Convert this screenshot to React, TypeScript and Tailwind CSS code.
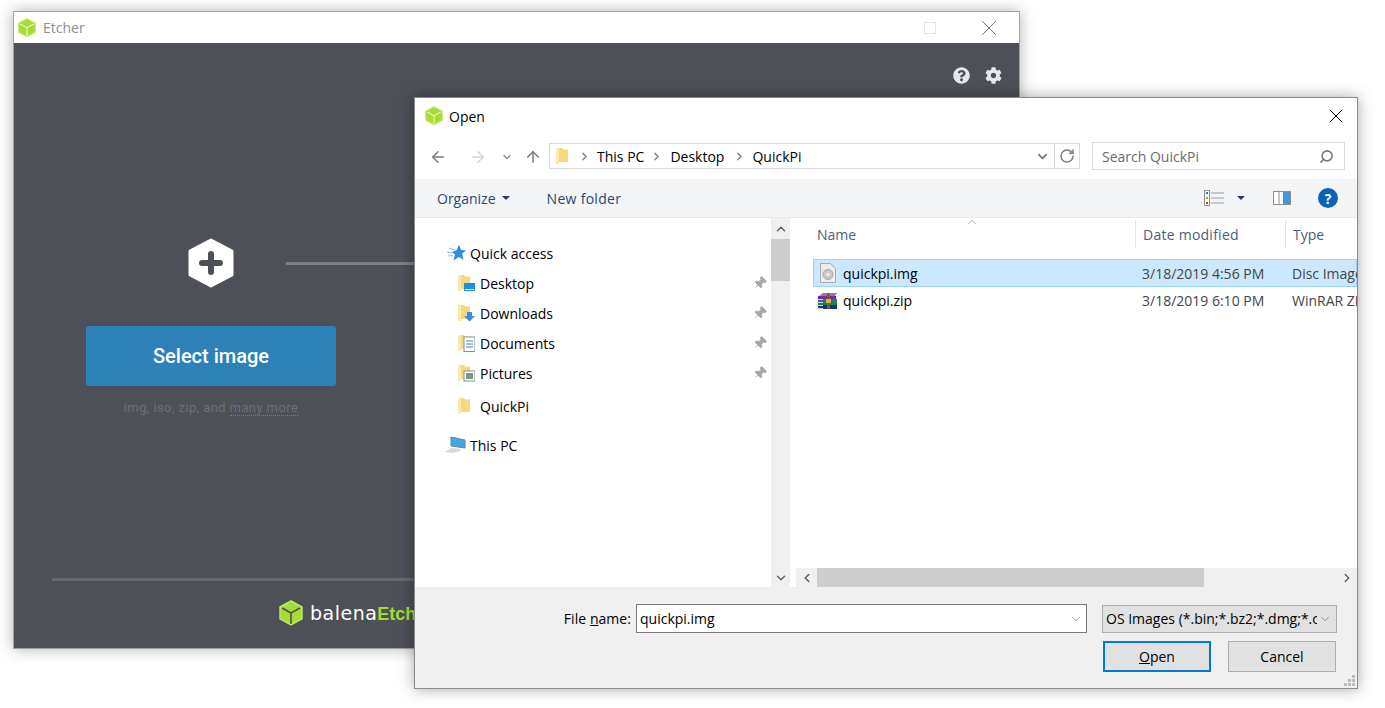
import { ChevronDown, ChevronLeft, ChevronRight, ChevronUp, X, ArrowLeft, ArrowRight, ArrowUp, RotateCw, Search, Pin } from "lucide-react"
import { FaCog, FaQuestionCircle } from "react-icons/fa"

const Cube = ({ size = 20, line = "#e6f7b8" }: { size?: number; line?: string }) => (
  <svg width={size} height={size * 1.08} viewBox="0 0 24 26">
    <path d="M12 1 23 7v12l-11 6-11-6V7z" fill="#a5dd36" stroke="#bfe96b" strokeWidth="1.5" strokeLinejoin="round" />
    <path d="M12 13 3 8M12 13l9-5M12 13v11" stroke={line} strokeWidth="1.6" fill="none" />
  </svg>
)

const Folder = ({ children }: { children?: React.ReactNode }) => (
  <svg width="17" height="18" viewBox="0 0 17 18" className="shrink-0">
    <path d="M0 1h6l1.500 1.500H12V15H2l-2 2z" fill="#f6d97c" />
    <path d="M0 1h3v16H0z" fill="#fbe8ad" />
    {children}
  </svg>
)

const StarIcon = () => (
  <svg width="19" height="18" viewBox="0 0 19 18">
    <path d="M12 .500l2 5.500 5 .3-3.900 3.500 1.400 6.200L12 13l-5.600 3.500 1.600-6L5 8l4.700-2z" fill="#2b8fe6" />
    <path d="M2 4l6 2M0 8l6 1M1 12l5-1" stroke="#86c4f6" strokeWidth="1.200" />
  </svg>
)

const PcIcon = () => (
  <svg width="21" height="18" viewBox="0 0 21 18">
    <path d="M6 1l14 3v8L6 10z" fill="#3fa7ea" stroke="#6d8391" strokeWidth="1" />
    <path d="M0 16l6-4 10 1-1 2-7 2z" fill="#d6d8da" />
  </svg>
)

const DiscFile = () => (
  <svg width="16" height="20" viewBox="0 0 16 20" className="shrink-0">
    <path d="M.5.500h10l5 5v14H.500z" fill="#ececec" stroke="#a9a9a9" />
    <circle cx="8" cy="11.500" r="5" fill="#c9c9c9" stroke="#a5a5a5" />
    <circle cx="8" cy="11.500" r="1.500" fill="#f4f4f4" />
  </svg>
)

const RarIcon = () => (
  <svg width="21" height="16" viewBox="0 0 21 16" className="shrink-0">
    <path d="M2 3l4-3h14l-2 3z" fill="#a56fb0" />
    <path d="M1 3h18v3H1z" fill="#7a2f86" />
    <path d="M1 6h19v3H1z" fill="#1f6fb8" />
    <path d="M1 9h19v3H1z" fill="#16883a" />
    <path d="M1 12h19v4H1z" fill="#1b2f86" />
    <path d="M0 6.500h6M0 9.500h6M0 12.500h6M0 15.500h6" stroke="#d8d8d8" strokeWidth="1" />
    <path d="M10 0h3v16h-3z" fill="#7f5f26" />
    <path d="M9 6h5v4H9z" fill="#d9b24a" />
  </svg>
)

const Caret = ({ color = "#1f3f66" }: { color?: string }) => (
  <svg width="8" height="4" viewBox="0 0 8 4"><path d="M0 0h8L4 4z" fill={color} /></svg>
)

const quickItems = [
  {
    name: "Desktop",
    badge: <><rect x="6" y="9" width="11" height="8" fill="#1e8fe0" /><rect x="7" y="15" width="9" height="1" fill="#fff" /></>,
  },
  {
    name: "Downloads",
    badge: <path d="M9 8h5v4h3l-5.500 5.500L6 12h3z" fill="#3b8ede" />,
  },
  {
    name: "Documents",
    badge: <><rect x="6" y="3" width="11" height="14.500" fill="#fff" stroke="#8d8d8d" /><path d="M8 7h7M8 10h7M8 13h7" stroke="#3f86c5" strokeWidth="1.200" /></>,
  },
  {
    name: "Pictures",
    badge: <><rect x="6" y="7" width="11" height="10" fill="#fff" stroke="#8d8d8d" /><rect x="8" y="9" width="7" height="6" fill="#6f9b87" /></>,
  },
]

export default function App() {
  return (
    <div className="relative h-[708px] w-[1385px] overflow-hidden bg-white font-['Open_Sans',sans-serif]">
      {/* Etcher window */}
      <div className="absolute left-[13px] top-[11px] flex h-[638px] w-[1007px] flex-col border border-[#a3a3a3] bg-white shadow-[0_0_14px_rgba(0,0,0,0.3)]">
        <div className="flex h-[31px] items-center pl-[4px]">
          <Cube size={18} />
          <span className="ml-[7px] text-[14px] text-[#8a9099]">Etcher</span>
          <div className="ml-auto flex items-center pr-[17px]">
            <div className="mr-[40px] h-[12px] w-[12px] border border-[#e4e4e4]" />
            <X size={26} strokeWidth={0.9} className="text-[#6f6f6f]" />
          </div>
        </div>
        <div className="flex flex-1 flex-col bg-[#4e5057] font-['Roboto',sans-serif]">
          <div className="flex h-[41px] items-end justify-end gap-[15px] pr-[17px] text-[#e8e8ea]">
            <FaQuestionCircle size={17} />
            <FaCog size={17} />
          </div>
          <div className="mt-[154px] flex items-center pl-[174px]">
            <svg width="46" height="50" viewBox="0 0 46 50">
              <path d="M23 2 44 13V37L23 48 2 37V13z" fill="#fff" stroke="#fff" strokeWidth="3" strokeLinejoin="round" />
              <path d="M14 25H32M23 16V34" stroke="#4e5057" strokeWidth="6" strokeLinecap="round" />
            </svg>
            <div className="ml-[52px] h-[3px] flex-1 bg-[#7e8085]" />
          </div>
          <div className="ml-[72px] mt-[38px] flex w-[250px] flex-col items-center">
            <div className="flex h-[60px] w-full items-center justify-center rounded-[3px] bg-[#2d80b8] pb-[1px] text-[20px] font-medium text-white">Select image</div>
            <div className="mt-[12px] text-[13px] tracking-[0.4px] text-[#6c6e74]">
              img, iso, zip, and <span className="border-b border-dotted border-[#797b80]">many more</span>
            </div>
          </div>
          <div className="mx-[38px] mt-auto h-[3px] bg-[#65676a]" />
          <div className="mb-[22px] mt-[19px] flex items-center pl-[265px]">
            <Cube size={24} line="#4e5057" />
            <span className="ml-[7px] whitespace-nowrap font-['DejaVu_Sans',sans-serif] text-[19px] leading-none tracking-[0.5px] text-white">balena<b className="font-['Liberation_Sans',sans-serif] text-[18px] tracking-normal text-[#a5d936]">Etcher</b></span>
          </div>
        </div>
      </div>

      {/* Open dialog */}
      <div className="absolute left-[414px] top-[97px] flex h-[592px] w-[944px] flex-col border border-[#8a8a8a] bg-white text-[14px] text-black shadow-[0_0_14px_rgba(0,0,0,0.35)]">
        <div className="flex h-[36px] shrink-0 items-center pl-[10px] pr-[9px]">
          <Cube size={18} />
          <span className="ml-[6px]">Open</span>
          <X size={24} strokeWidth={1} className="ml-auto" />
        </div>
        <div className="flex h-[45px] shrink-0 items-start pt-[9px]">
          <div className="flex h-[27px] w-[134px] shrink-0 items-center pl-[14px]">
            <ArrowLeft size={18} strokeWidth={2} className="text-[#7a7a7a]" />
            <ArrowRight size={18} strokeWidth={2} className="ml-[22px] text-[#d6d6d6]" />
            <ChevronDown size={12} strokeWidth={2.500} className="ml-[14px] text-[#8a8a8a]" />
            <ArrowUp size={18} strokeWidth={2} className="ml-[11px] text-[#7a7a7a]" />
          </div>
          <div className="flex h-[26px] w-[531px] shrink-0 items-center border border-[#d9d9d9] pl-[6px]">
            <Folder />
            <ChevronRight size={13} strokeWidth={2.500} className="ml-[5px] text-[#808080]" />
            <span className="ml-[6px]">This PC</span>
            <ChevronRight size={13} strokeWidth={2.500} className="ml-[6px] text-[#808080]" />
            <span className="ml-[7px]">Desktop</span>
            <ChevronRight size={13} strokeWidth={2.500} className="ml-[9px] text-[#808080]" />
            <span className="ml-[6px]">QuickPi</span>
            <ChevronDown size={15} strokeWidth={2.500} className="ml-auto mr-[4px] text-[#6e6e6e]" />
            <div className="flex h-full w-[25px] items-center justify-center border-l border-[#d9d9d9]">
              <RotateCw size={16} strokeWidth={2.200} className="text-[#7a7a7a]" />
            </div>
          </div>
          <div className="ml-[12px] flex h-[28px] w-[253px] -translate-y-[1px] items-center justify-between border border-[#d9d9d9] pl-[9px] pr-[10px] text-[#6d6d6d]">
            <span>Search QuickPi</span>
            <Search size={15} strokeWidth={2.500} className="-scale-x-100 text-[#7a7a7a]" />
          </div>
        </div>
        <div className="flex h-[39px] shrink-0 items-center border-b border-[#e9eaec] bg-[#f4f5f7] pl-[22px] pr-[19px] text-[#1e4a73]">
          <span>Organize</span>
          <span className="ml-[6px]"><Caret /></span>
          <span className="ml-[37px] tracking-[0.3px]">New folder</span>
          <svg width="20" height="16" viewBox="0 0 20 16" className="ml-auto">
            <path d="M.5.500h5v15h-5z" fill="#fff" stroke="#8d8d8d" />
            <path d="M2 2h2v2H2z" fill="#3a6fb0" /><path d="M2 7h2v2H2z" fill="#a8a028" /><path d="M2 12h2v2H2z" fill="#b8472b" />
            <path d="M7 3h13M7 8h13M7 13h13" stroke="#9a9a9a" />
          </svg>
          <span className="ml-[13px]"><Caret /></span>
          <svg width="18" height="14" viewBox="0 0 18 14" className="ml-[28px]">
            <rect x=".5" y=".500" width="17" height="13" fill="#fff" stroke="#8d8d8d" />
            <rect x="10" y="1" width="7" height="12" fill="#3f97e4" />
            <path d="M6 1v12" stroke="#8d8d8d" />
          </svg>
          <div className="ml-[27px] flex h-[20px] w-[20px] items-center justify-center rounded-full bg-[#0a63b4] text-[14px] font-bold text-white">?</div>
        </div>
        <div className="flex min-h-0 flex-1">
          {/* nav pane */}
          <div className="w-[356px] shrink-0 pt-[20px]">
            <div className="flex h-[30px] items-center pl-[32px]">
              <StarIcon />
              <span className="ml-[4px]">Quick access</span>
            </div>
            {quickItems.map((item) => (
              <div key={item.name} className="flex h-[30px] items-center pl-[43px] pr-[4px]">
                <Folder>{item.badge}</Folder>
                <span className="ml-[5px]">{item.name}</span>
                <Pin size={14} fill="#a4a8ad" strokeWidth={1.500} className="ml-auto rotate-45 text-[#a4a8ad]" />
              </div>
            ))}
            <div className="mt-[3px] flex h-[30px] items-center pl-[43px]">
              <Folder />
              <span className="ml-[5px]">QuickPi</span>
            </div>
            <div className="mt-[9px] flex h-[30px] items-center pl-[30px]">
              <PcIcon />
              <span className="ml-[4px]">This PC</span>
            </div>
          </div>
          <div className="flex w-[19px] shrink-0 flex-col items-center bg-[#f0f0f0]">
            <div className="flex h-[21px] items-center"><ChevronUp size={14} strokeWidth={2.500} className="text-[#606060]" /></div>
            <div className="h-[42px] w-full bg-[#cdcdcd]" />
            <div className="mt-auto flex h-[19px] items-center"><ChevronDown size={14} strokeWidth={2.500} className="text-[#606060]" /></div>
          </div>
          {/* file list */}
          <div className="ml-[6px] flex min-w-0 flex-1 flex-col overflow-hidden">
            <div className="relative flex h-[30px] shrink-0 items-center pl-[21px] pt-[2px] text-[#4c607a]">
              <ChevronUp size={14} strokeWidth={1} className="absolute left-[169px] top-[-3px] text-[#707070]" />
              <span className="w-[318px] shrink-0">Name</span>
              <div className="flex h-full w-[150px] shrink-0 items-center border-l border-[#e5e5e5] pl-[7px] tracking-[0.25px]">Date modified</div>
              <div className="flex h-full flex-1 items-center border-l border-[#e5e5e5] pl-[7px]">Type</div>
            </div>
            <div className="ml-[17px] mt-[11px] flex h-[28px] shrink-0 items-center whitespace-nowrap border border-[#99d1ff] bg-[#cce8ff] pl-[6px]">
              <DiscFile />
              <span className="ml-[7px] w-[299px] shrink-0">quickpi.img</span>
              <span className="w-[150px] shrink-0 text-[#444]">3/18/2019 4:56 PM</span>
              <span className="text-[#444]">Disc Image File</span>
            </div>
            <div className="ml-[17px] flex h-[27px] shrink-0 items-center whitespace-nowrap pl-[4px]">
              <RarIcon />
              <span className="ml-[5px] w-[299px] shrink-0">quickpi.zip</span>
              <span className="w-[150px] shrink-0 text-[#444]">3/18/2019 6:10 PM</span>
              <span className="text-[#444]">WinRAR ZIP archive</span>
            </div>
            <div className="mt-auto flex h-[19px] shrink-0 items-center bg-[#f0f0f0]">
              <div className="flex w-[21px] justify-center"><ChevronLeft size={14} strokeWidth={2.500} className="text-[#606060]" /></div>
              <div className="h-full w-[387px] bg-[#cdcdcd]" />
              <div className="ml-auto flex w-[21px] justify-center"><ChevronRight size={14} strokeWidth={2.500} className="text-[#606060]" /></div>
            </div>
          </div>
        </div>
        {/* footer */}
        <div className="relative h-[101px] shrink-0 bg-[#f0f0f0] pr-[20px] pt-[17px]">
          <div className="flex items-center justify-end">
            <span className="mr-[5px] tracking-[0.05px]">File <u>n</u>ame:</span>
            <div className="flex h-[29px] w-[451px] items-center justify-between border border-[#7a7a7a] bg-white pl-[3px] pr-[3px]">
              <span>quickpi.img</span>
              <ChevronDown size={14} strokeWidth={1} className="text-[#555]" />
            </div>
            <div className="ml-[15px] flex h-[28px] w-[235px] items-center justify-between border border-[#adadad] bg-[#e1e1e1] pl-[3px] pr-[4px]">
              <span className="w-[211px] overflow-hidden whitespace-nowrap">OS Images (*.bin;*.bz2;*.dmg;*.cue;*.iso)</span>
              <ChevronDown size={14} strokeWidth={1} className="text-[#555]" />
            </div>
          </div>
          <div className="mr-[1px] mt-[8px] flex justify-end gap-[17px]">
            <div className="flex h-[31px] w-[108px] items-center justify-center border-2 border-[#0078d7] bg-[#e1e1e1]"><span><u>O</u>pen</span></div>
            <div className="flex h-[31px] w-[108px] items-center justify-center border border-[#adadad] bg-[#e1e1e1]">Cancel</div>
          </div>
          <svg width="12" height="12" viewBox="0 0 12 12" className="absolute bottom-[1px] right-[1px]">
            <path d="M8 0h3v3H8zM4 4h3v3H4zM8 4h3v3H8zM0 8h3v3H0zM4 8h3v3H4zM8 8h3v3H8z" fill="#bdbdbd" />
          </svg>
        </div>
      </div>
    </div>
  )
}
